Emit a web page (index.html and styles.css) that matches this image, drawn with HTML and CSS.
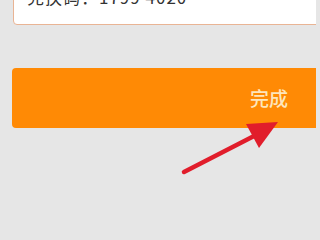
FILE: index.html
```html
<!DOCTYPE html>
<html>
<head>
<meta charset="utf-8">
<link rel="stylesheet" href="styles.css">
</head>
<body>
<div class="card"><span class="card-text">兑换码：1799 4020</span></div>
<div class="btn"><span class="btn-text">完成</span></div>
<svg class="arrow" width="316" height="211" viewBox="0 0 316 211">
  <line x1="184" y1="172" x2="256" y2="135" stroke="#e11d2b" stroke-width="4.5" stroke-linecap="round"/>
  <polygon points="246,124 278,122 259,148" fill="#e11d2b"/>
</svg>
</body>
</html>
```
FILE: styles.css
```css
html, body {
  margin: 0;
  padding: 0;
  background: #e6e6e6;
  width: 316px;
  height: 211px;
  overflow: hidden;
  font-family: "Noto Sans CJK SC", "Noto Sans", sans-serif;
}
.card {
  margin-top: -20px;
  margin-left: 13px;
  margin-right: -20px;
  height: 45px;
  background: #ffffff;
  border: 1px solid #e9b494;
  border-radius: 4px;
  display: flex;
  align-items: flex-end;
  padding-left: 13px;
  padding-bottom: 19px;
  box-sizing: border-box;
}
.card-text {
  font-size: 17px;
  line-height: 17px;
  color: #333;
  letter-spacing: 1px;
}
.btn {
  margin-top: 43px;
  margin-left: 12px;
  margin-right: -20px;
  height: 60px;
  background: #ff8a05;
  border-radius: 4px;
  display: flex;
  align-items: center;
  justify-content: flex-end;
  padding-right: 48px;
  box-sizing: border-box;
}
.btn-text {
  color: #fde6bd;
  font-size: 19px;
  font-weight: 500;
  line-height: 20px;
}
.arrow {
  position: absolute;
  left: 0;
  top: 0;
}
```
